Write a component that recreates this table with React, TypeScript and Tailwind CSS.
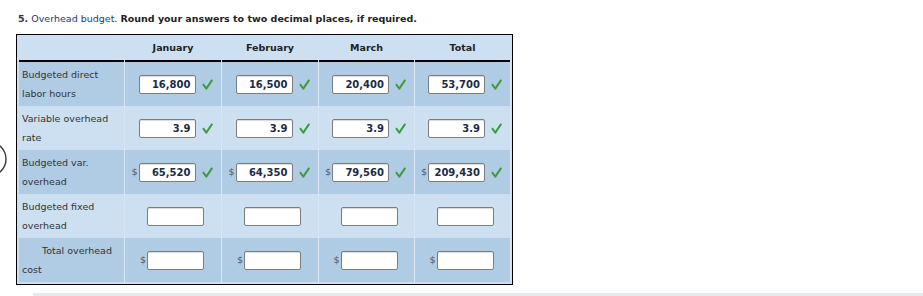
import React from "react";

const Check = () => (
  <svg width="11" height="11" viewBox="0 0 11 11" className="ml-[6px] shrink-0">
    <path d="M1 5.2 L4.3 9.6 L10.2 0.8" fill="none" stroke="#3f9b3f" strokeWidth="2" strokeLinejoin="round" />
  </svg>
);

type Cell = { v?: string; dollar?: boolean; check?: boolean };

const Input = ({ c }: { c: Cell }) => (
  <div className="flex items-center justify-center pl-[5px] h-full">
    {c.dollar && (
      <span className="w-[7px] -ml-[7px] text-[9.5px] text-[#555] leading-none">$</span>
    )}
    <div className="w-[57px] h-[19px] bg-white border border-[#7d7d7d] rounded-[2px] shadow-[inset_0_1px_1px_rgba(0,0,0,0.15)] flex items-center justify-end pr-[4px] text-[10px] font-bold text-[#1b2b45] shrink-0">
      {c.v}
    </div>
    {c.check && <Check />}
  </div>
);

const rows: { label: React.ReactNode; dark: boolean; cells: Cell[] }[] = [
  {
    label: <>Budgeted direct labor hours</>,
    dark: true,
    cells: [
      { v: "16,800", check: true },
      { v: "16,500", check: true },
      { v: "20,400", check: true },
      { v: "53,700", check: true },
    ],
  },
  {
    label: <>Variable overhead rate</>,
    dark: false,
    cells: [
      { v: "3.9", check: true },
      { v: "3.9", check: true },
      { v: "3.9", check: true },
      { v: "3.9", check: true },
    ],
  },
  {
    label: <>Budgeted var. overhead</>,
    dark: true,
    cells: [
      { v: "65,520", dollar: true, check: true },
      { v: "64,350", dollar: true, check: true },
      { v: "79,560", dollar: true, check: true },
      { v: "209,430", dollar: true, check: true },
    ],
  },
  {
    label: <>Budgeted fixed overhead</>,
    dark: false,
    cells: [{}, {}, {}, {}],
  },
  {
    label: <span className="block indent-[20px]">Total overhead cost</span>,
    dark: true,
    cells: [{ dollar: true }, { dollar: true }, { dollar: true }, { dollar: true }],
  },
];

export default function App() {
  return (
    <div
      className="relative w-[923px] h-[296px] bg-white overflow-hidden text-[#333]"
      style={{ fontFamily: '"DejaVu Sans", Verdana, sans-serif' }}
    >
      <svg className="absolute left-0 top-[140px]" width="10" height="40" viewBox="0 0 10 40">
        <circle cx="-11" cy="19" r="17" fill="none" stroke="#3a3a3a" strokeWidth="1.4" />
      </svg>

      <div className="pt-[12px] pl-[18px] h-[34px] text-[9.5px] leading-[14px] whitespace-nowrap">
        <span className="font-bold text-[#333]">5.</span>{" "}
        <span className="text-[#1d3c6e]">Overhead budget.</span>{" "}
        <span className="font-bold text-[#222]">Round your answers to two decimal places, if required.</span>
      </div>

      <div className="ml-[16px] w-[497px] border border-black bg-[#cde0f1] p-[2px] pr-[1px]">
        <div className="grid grid-cols-[105px_96px_96px_95px_95px] gap-x-[1px]">
          <div className="h-[25px] border-b-2 border-black" />
          {["January", "February", "March", "Total"].map((h) => (
            <div
              key={h}
              className="h-[25px] border-b-2 border-black flex items-center justify-center text-[9.5px] font-bold text-[#222]"
            >
              {h}
            </div>
          ))}
        </div>
        {rows.map((r, i) => (
          <div
            key={i}
            className={`grid grid-cols-[105px_96px_96px_95px_95px] gap-x-[1px] h-[44px] ${
              r.dark ? "bg-[#dbe7f3]" : "bg-[#d6e6f4]"
            }`}
          >
            <div
              className={`${r.dark ? "bg-[#b0cce5]" : "bg-[#cde0f1]"} flex items-center pl-[3px] pr-[2px] text-[9.5px] leading-[19px] text-[#333]`}
            >
              <div>{r.label}</div>
            </div>
            {r.cells.map((c, j) => (
              <div key={j} className={r.dark ? "bg-[#b0cce5]" : "bg-[#cde0f1]"}>
                <Input c={c} />
              </div>
            ))}
          </div>
        ))}
      </div>

      <div className="ml-[33px] mt-[8px] h-[10px] bg-[#e6eaee]" />
    </div>
  );
}
